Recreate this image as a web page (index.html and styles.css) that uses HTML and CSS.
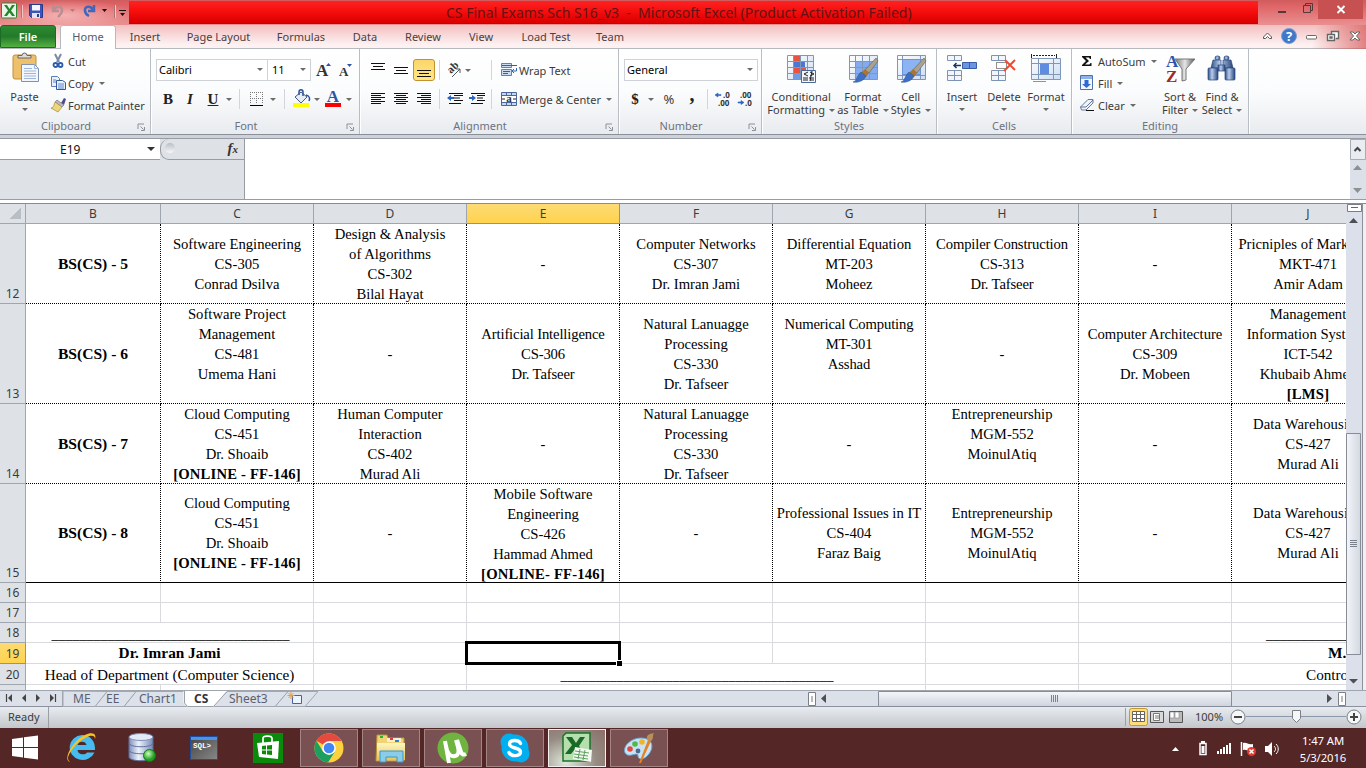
FILE: index.html
```html
<!DOCTYPE html>
<html lang="en">
<head>
<meta charset="utf-8">
<title>CS Final Exams Sch S16_v3 - Microsoft Excel</title>
<link rel="stylesheet" href="styles.css">
</head>
<body>
<svg width="0" height="0" class="defs">
  <defs>
    <linearGradient id="blue" x1="0" y1="0" x2="0" y2="1"><stop offset="0" stop-color="#9dbdee"/><stop offset="1" stop-color="#3f6ac0"/></linearGradient>
    <linearGradient id="pale" x1="0" y1="0" x2="1" y2="1"><stop offset="0" stop-color="#fff"/><stop offset="1" stop-color="#cdddf3"/></linearGradient>
    <linearGradient id="steel" x1="0" y1="0" x2="1" y2="0"><stop offset="0" stop-color="#2f4f86"/><stop offset=".4" stop-color="#b9cdec"/><stop offset="1" stop-color="#27457c"/></linearGradient>
    <linearGradient id="grey" x1="0" y1="0" x2="1" y2="0"><stop offset="0" stop-color="#777"/><stop offset=".5" stop-color="#e6e6e6"/><stop offset="1" stop-color="#555"/></linearGradient>
    <linearGradient id="gold" x1="0" y1="0" x2="0" y2="1"><stop offset="0" stop-color="#fff6c0"/><stop offset="1" stop-color="#e5c557"/></linearGradient>
    <linearGradient id="db" x1="0" y1="0" x2="1" y2="0"><stop offset="0" stop-color="#7c90bd"/><stop offset=".4" stop-color="#eef3fb"/><stop offset="1" stop-color="#7489b8"/></linearGradient>
    <linearGradient id="term" x1="0" y1="0" x2="1" y2="1"><stop offset="0" stop-color="#444"/><stop offset="1" stop-color="#888"/></linearGradient>
    <radialGradient id="ball" cx=".4" cy=".35"><stop offset="0" stop-color="#cffcc0"/><stop offset="1" stop-color="#1fa01f"/></radialGradient>
    <g id="excel"><rect x=".5" y="1" width="15" height="15" rx="1" fill="#e9f5e6" stroke="#2b8735"/><path d="M3 3h3l2.500 4L11 3h3l-4 5.500L14 14h-3L8.500 10.500 6 14H3l4-5.500z" fill="#25852e"/></g>
    <g id="brush"><path d="M29 4l2 3-9 12-4-3z" fill="#a9a28f" stroke="#655e4d" stroke-width=".6"/><path d="M18 15l4 4-3 4-5-4z" fill="#a9752f"/><path d="M14 18l5 4c-2 5-8 7-13 6 4-1 4-7 8-10z" fill="#3f6fc4" stroke="#2c4f91" stroke-width=".5"/></g>
    <g id="launch"><path d="M1 6V1h6M3.500 3.500l3 3M7.500 4v3.500H4" fill="none" stroke="#8b9099"/></g>
  </defs>
</svg>
<div class="window">
  <header class="titlebar">
    <div class="qat">
      <svg width="129" height="24" viewBox="0 0 129 24">
        <use href="#excel" x="1" y="2"/>
        <path d="M21.500 5v13M114.500 5v13" stroke="#a87575"/><path d="M22.500 5v13M115.500 5v13" stroke="#f3c4c4"/>
        <path d="M29.500 4.500h13v13h-11l-2-2z" fill="#3d55b8" stroke="#27398a"/><path d="M32 5h8v5.500h-8z" fill="#f4f6ff"/><path d="M32 13h8v5h-8z" fill="#dfe5f5"/><path d="M37 14h2v3h-2z" fill="#2a3d92"/>
        <path d="M53 5v6h6M54 10c2-5 9-4 8 1-.5 3-2 4-4 6" fill="none" stroke="#b98e92" stroke-width="2.400"/>
        <path d="M70 9h5l-2.500 3z" fill="#a88083"/>
        <path d="M94 5v6h-6M93 10c-2-5-9-4-8 1 .5 3 2 4 4 5" fill="none" stroke="#3d68bb" stroke-width="2.500"/>
        <path d="M102 9h5l-2.500 3zM120 13h5l-2.500 3zM119 10h7v1h-7z" fill="#111"/>
      </svg>
    </div>
    <div class="caption">CS Final Exams Sch S16_v3 &nbsp;-&nbsp; Microsoft Excel (Product Activation Failed)</div>
    <svg class="winbtns" width="108" height="24" viewBox="0 0 108 24"><rect x="60" y="0" width="45" height="19" fill="#c75050"/><path d="M20 11h8v2h-8z" fill="#53393c"/><path d="M45.500 5.500h7v7h-7zM47.500 5V3.500h7v7H53" fill="none" stroke="#53393c"/><path d="M79.500 6l7 7M86.500 6l-7 7" stroke="#fff" stroke-width="1.900"/></svg>
  </header>
  <nav class="tabs">
    <div class="file">File</div><div class="tab active">Home</div><div class="tab">Insert</div><div class="tab">Page Layout</div><div class="tab">Formulas</div><div class="tab">Data</div><div class="tab">Review</div><div class="tab">View</div><div class="tab">Load Test</div><div class="tab">Team</div>
    <svg class="tabtools" width="106" height="24" viewBox="0 0 106 24"><path d="M3.500 13.500v-1.500l4-4 4 4v1.500h-2L7.500 11.500 5.500 13.500z" fill="#fff" stroke="#555"/><circle cx="29" cy="11" r="7.500" fill="#3f78c9" stroke="#7d9fd5"/><text x="29" y="15.500" text-anchor="middle" class="q">?</text><rect x="46.500" y="10.500" width="10" height="3.500" rx="1" fill="#fff" stroke="#666"/><path d="M71.500 9V6.500h7v7H76M67.500 9.500h7v6h-7zM70 12h2v1h-2z" fill="#fff" stroke="#666" stroke-width="1.400"/><path d="M90 7h3l2 2 2-2h3l-3.500 4 3.500 4h-3l-2-2-2 2h-3l3.500-4z" fill="#fff" stroke="#666"/></svg>
  </nav>

  <section class="ribbon">
    <div class="group g-clip">
      <div class="body">
        <div class="big paste"><svg width="32" height="32" viewBox="0 0 32 32"><rect x="4" y="3" width="23" height="24" rx="2" fill="#efc06b" stroke="#c18f3b"/><path d="M9 6V3.500h4a2.500 2.500 0 0 1 5 0h4V6z" fill="#ddd" stroke="#666"/><path d="M12.500 12.500h13l4 4v13h-17z" fill="#f3f7fd" stroke="#7d93b3"/><path d="M25.500 12.500v4h4M15 16.500h8M15 19h12M15 21.500h12M15 24h12M15 26.500h12" fill="none" stroke="#9fb6d8"/></svg><span>Paste</span><i class="dd"></i></div>
        <div class="stack">
          <div class="cmd"><svg width="18" height="16" viewBox="0 0 18 16"><path d="M6 1l4 8M12 1L8 9" stroke="#7b8aa0" stroke-width="2"/><circle cx="6.500" cy="12" r="2" fill="none" stroke="#2c5cac" stroke-width="1.800"/><circle cx="11.500" cy="12" r="2" fill="none" stroke="#2c5cac" stroke-width="1.800"/></svg>Cut</div>
          <div class="cmd"><svg width="18" height="16" viewBox="0 0 18 16"><path d="M2.500 1.500h6l2 2v8h-8z" fill="#eaf1fb" stroke="#5c7fb9"/><path d="M7.500 5.500h6l3 2v7h-9z" fill="#eaf1fb" stroke="#34599c"/><path d="M9 9h6M9 11h6M4 5h3M4 7h3M9 13h6" stroke="#5a86cf"/></svg>Copy<i class="dd"></i></div>
          <div class="cmd"><svg width="18" height="16" viewBox="0 0 18 16"><path d="M12 6l3-5 2 1-2 6z" fill="#4d4c86"/><path d="M8 3l7 5-2 2-7-5z" fill="#b9b9c6" stroke="#676779" stroke-width=".6"/><path d="M6 5l7 5-4 5-7-4c3 0 3-4 4-6z" fill="#ecd77e" stroke="#a98632" stroke-width=".7"/></svg>Format Painter</div>
        </div>
      </div>
      <div class="label"><span>Clipboard</span><svg width="9" height="9"><use href="#launch"/></svg></div>
    </div>

    <div class="group g-font">
      <div class="rows">
        <div class="row r1"><div class="combo">Calibri<i class="dd"></i></div><div class="combo">11<i class="dd"></i></div><svg width="22" height="22" viewBox="0 0 22 22"><text x="5" y="17" class="serifb s17">A</text><path d="M15 7h5l-2.500-3z" fill="#2c55a8"/></svg><svg width="20" height="22" viewBox="0 0 20 22"><text x="4" y="17" class="serifb s12">A</text><path d="M12 5h5l-2.500 3z" fill="#2c55a8"/></svg></div>
        <div class="row r2"><b>B</b><em>I</em><u>U</u><i class="dd"></i><i class="sep"></i><svg width="20" height="20" viewBox="0 0 20 20"><path d="M3 3.500h13M3 9.500h13M3.500 3v12M9.500 3v12M15.500 3v12" stroke="#777" stroke-dasharray="1 1"/><path d="M3 16.500h13" stroke="#000"/></svg><i class="dd"></i><i class="sep"></i><svg width="20" height="20" viewBox="0 0 20 20"><path d="M4 8l6-5 6 5-6 6z" fill="#e8edf5" stroke="#415a88"/><path d="M8 6V3c0-3 4-3 4 0v4M15 6c4 1 4 4 3 6" stroke="#2e5297" stroke-width="1.500" fill="none"/><rect x="2" y="14" width="16" height="4" fill="#ff0"/></svg><i class="dd"></i><svg width="20" height="20" viewBox="0 0 20 20"><text x="10" y="13" text-anchor="middle" class="serifb s17 blue">A</text><rect x="2" y="14" width="16" height="4" fill="#f00"/></svg><i class="dd"></i></div>
      </div>
      <div class="label"><span>Font</span><svg width="9" height="9"><use href="#launch"/></svg></div>
    </div>

    <div class="group g-align">
      <div class="rows">
        <div class="row r1"><svg width="16" height="20" viewBox="0 0 16 20"><path d="M1 3.500h14M3 6.500h10M1 5h0M1 9.500h14" stroke="#111"/></svg><svg width="16" height="20" viewBox="0 0 16 20"><path d="M1 7.500h14M3 10.500h10M1 13.500h14" stroke="#111"/></svg><span class="on"><svg width="16" height="20" viewBox="0 0 16 20"><path d="M1 10.500h14M3 13.500h10M1 16.500h14" stroke="#111"/></svg></span><i class="sep"></i><svg class="free" width="18" height="18" viewBox="0 0 18 18"><text transform="translate(6 13) rotate(-45)" class="serifb s10">ab</text><path d="M7 16l8-8M11 8h4v4" fill="none" stroke="#555"/></svg><i class="dd"></i><i class="sep tall"></i><svg width="18" height="18" viewBox="0 0 18 18"><path d="M1.500 2.500h10v4h-10zM1.500 8.500h10v6h-10z" fill="#cbdcf3" stroke="#6181ae"/><path d="M2 4.500h15M3 10.500h7M3 12.500h5" stroke="#805127"/><path d="M16.500 7v3h-4M14 8l-2 2 2 2" fill="none" stroke="#3664ae"/></svg><span class="t">Wrap Text</span></div>
        <div class="row r2"><svg width="16" height="16" viewBox="0 0 16 16"><path d="M1 2.500h14M1 4.500h10M1 6.500h14M1 8.500h10M1 10.500h14M1 12.500h10" stroke="#111"/></svg><svg width="16" height="16" viewBox="0 0 16 16"><path d="M1 2.500h14M3 4.500h10M1 6.500h14M3 8.500h10M1 10.500h14M3 12.500h10" stroke="#111"/></svg><svg width="16" height="16" viewBox="0 0 16 16"><path d="M1 2.500h14M5 4.500h10M1 6.500h14M5 8.500h10M1 10.500h14M5 12.500h10" stroke="#111"/></svg><i class="sep"></i><svg width="18" height="16" viewBox="0 0 18 16"><path d="M3 2.500h14M8 4.500h9M8 7h6M8 9.500h9M3 12.500h12" stroke="#111"/><path d="M1 7l4-3v2h3v2H5v2z" fill="#2c64c4"/></svg><svg width="18" height="16" viewBox="0 0 18 16"><path d="M3 2.500h14M9 4.500h8M9 7h6M9 9.500h8M3 12.500h12" stroke="#111"/><path d="M8 7L4 4v2H1v2h3v2z" fill="#2c64c4"/></svg><i class="sep tall"></i><svg width="18" height="16" viewBox="0 0 18 16"><path d="M1.500 1.500h15v13h-15zM1.500 4.500h15M1.500 11.500h15M6.500 1v3M11.500 1v3M6.500 12v3M11.500 12v3" fill="#c4d6f1" stroke="#49679c"/><path d="M2 5h14v6H2z" fill="#fff"/><text x="9" y="11" text-anchor="middle" class="serifb s10">a</text><path d="M2 8h3M13 8h3" stroke="#222"/></svg><span class="t">Merge &amp; Center</span><i class="dd"></i></div>
      </div>
      <div class="label"><span>Alignment</span><svg width="9" height="9"><use href="#launch"/></svg></div>
    </div>

    <div class="group g-num">
      <div class="rows">
        <div class="row r1"><div class="combo">General<i class="dd"></i></div></div>
        <div class="row r2"><b class="dollar">$</b><i class="dd"></i><span class="pct">%</span><b class="comma">,</b><i class="sep"></i><svg width="18" height="18" viewBox="0 0 18 18"><text x="9" y="8" class="num">.0</text><text x="4" y="16" class="num">.00</text><path d="M1 5l3-2v1.500h3v1H4V7z" fill="#2c64c4" stroke="#2c64c4" stroke-width=".6"/></svg><svg width="18" height="18" viewBox="0 0 18 18"><text x="4" y="8" class="num">.00</text><text x="9" y="16" class="num">.0</text><path d="M8 12.500l-3-2V12H2v1h3v1.500z" fill="#2c64c4" stroke="#2c64c4" stroke-width=".6"/></svg></div>
      </div>
      <div class="label"><span>Number</span><svg width="9" height="9"><use href="#launch"/></svg></div>
    </div>

    <div class="group g-style">
      <div class="body">
        <div class="big"><svg width="32" height="32" viewBox="0 0 32 32"><path d="M2.500 3.500h26v24h-26z" fill="url(#pale)" stroke="#7f97b8"/><path d="M9 4h6v23H9z" fill="#6f9ae4"/><path d="M9 4h6v5H9zM9 16h12v5H9z" fill="#e8523f"/><path d="M9 10h11v5H9z" fill="#4779d2"/><path d="M8.500 3v24M15.500 3v24M22.500 3v24M2 9.500h26M2 15.500h26M2 21.500h26" stroke="#7f97b8"/><path d="M16.500 18.500h14v12h-14z" fill="#f3f6fc" stroke="#496999"/><path d="M23 20l-4 2 4 2M18 26h5M18 28h5M25 20l4 2-4 2M24 26h5M25 28h4M27 19l-2 10" fill="none" stroke="#222"/></svg><span>Conditional</span><span>Formatting<i class="dd"></i></span></div>
        <div class="big"><svg width="32" height="32" viewBox="0 0 32 32"><path d="M2.500 3.500h28v24h-28z" fill="url(#pale)" stroke="#7f97b8"/><path d="M9 9h21v18H9z" fill="#83abef"/><path d="M8.500 3v24M15.500 3v24M22.500 3v24M2 9.500h28M2 15.500h28M2 21.500h28" stroke="#7f97b8"/><use href="#brush" y="2"/></svg><span>Format</span><span>as Table<i class="dd"></i></span></div>
        <div class="big"><svg width="32" height="32" viewBox="0 0 32 32"><path d="M2.500 3.500h28v24h-28zM7.500 3v24M25.500 3v24M2 7.500h28M2 23.500h28" fill="url(#pale)" stroke="#7f97b8"/><path d="M7.500 7.500h18v15h-18z" fill="#8db4f2" stroke="#6b93d5"/><use href="#brush" y="2"/></svg><span>Cell</span><span>Styles<i class="dd"></i></span></div>
      </div>
      <div class="label"><span>Styles</span></div>
    </div>

    <div class="group g-cells">
      <div class="body">
        <div class="big"><svg width="32" height="32" viewBox="0 0 32 32"><path d="M1.500 3.500h14v5h-14zM8.500 3v5M1.500 18.500h14v10h-14zM1.500 23.500h14M8.500 18v10" fill="#f2f6fc" stroke="#7d93b3"/><path d="M16.500 10.500h14v6h-14zM23.500 10v6" fill="#6a95e3" stroke="#3a5ea6"/><path d="M15 13.500H8M10.500 11L8 13.500l2.500 2.500" fill="none" stroke="#1e355f" stroke-width="1.500"/></svg><span>Insert</span><i class="dd"></i></div>
        <div class="big"><svg width="32" height="32" viewBox="0 0 32 32"><path d="M3.500 3.500h14v5h-14zM10.500 3v5M3.500 18.500h14v10h-14zM3.500 23.500h14M10.500 18v10" fill="#f2f6fc" stroke="#7d93b3"/><path d="M8.500 10.500h10v6h-10z" fill="none" stroke="#222" stroke-dasharray="1 1"/><path d="M17 8l10 10M27 8L16 19" stroke="#ee4b31" stroke-width="2"/></svg><span>Delete</span><i class="dd"></i></div>
        <div class="big"><svg width="32" height="32" viewBox="0 0 32 32"><path d="M1.500 2v4M26.500 2v4" stroke="#222"/><path d="M3 3.500h22" stroke="#222" stroke-dasharray="2 1"/><path d="M1.500 6.500h29v21h-29zM8.500 6v21M23.500 6v21M1 11.500h29M1 22.500h29" fill="url(#pale)" stroke="#7f97b8"/><path d="M10 12h9v10h-9z" fill="#5d8ce0"/><path d="M3 29.500h13" stroke="#8695ad"/></svg><span>Format</span><i class="dd"></i></div>
      </div>
      <div class="label"><span>Cells</span></div>
    </div>

    <div class="group g-edit">
      <div class="body">
        <div class="stack">
          <div class="cmd"><svg width="18" height="16" viewBox="0 0 18 16"><path d="M3 3h9v3h-1l-1-1.500H6.500L10 8l-4 3.500h4.500l1-1.500h1v3H3v-1l4-4-4-4z" fill="#111"/></svg>AutoSum<i class="dd"></i></div>
          <div class="cmd"><svg width="18" height="16" viewBox="0 0 18 16"><path d="M1.500.5h12v14h-12z" fill="#f3f7fd" stroke="#4f71ad"/><path d="M2 1h11v3H2z" fill="#8fb2ea"/><path d="M5.500 5h4v4h2.500l-4.500 4L3 9h2.500z" fill="#2d6bd3"/></svg>Fill<i class="dd"></i></div>
          <div class="cmd"><svg width="18" height="16" viewBox="0 0 18 16"><path d="M1.500 10L9 2.500h5V6l-7 7H2.500z" fill="#eef2fa" stroke="#66799a"/><path d="M1.500 10h5.500l7-7" fill="none" stroke="#66799a"/><path d="M7 13.500h8" stroke="#111"/></svg>Clear<i class="dd"></i></div>
        </div>
        <div class="big"><svg width="32" height="32" viewBox="0 0 32 32"><text x="2" y="15" class="serifb s17 blue">A</text><text x="2" y="30" class="serifb s17 red">Z</text><path d="M11 7h20l-9 10v11l-4 1V17z" fill="url(#grey)" stroke="#777"/></svg><span>Sort &amp;</span><span>Filter<i class="dd"></i></span></div>
        <div class="big"><svg width="32" height="32" viewBox="0 0 32 32"><g fill="url(#steel)" stroke="#27457c" stroke-width=".7"><rect x="9" y="4" width="5" height="4" rx="2"/><rect x="18" y="4" width="5" height="4" rx="2"/><path d="M7 8h8v8H5zM17 8h8l2 8H17z"/><rect x="2" y="16" width="10" height="12" rx="1"/><rect x="19" y="16" width="10" height="12" rx="1"/><rect x="12" y="13" width="7" height="6"/></g></svg><span>Find &amp;</span><span>Select<i class="dd"></i></span></div>
      </div>
      <div class="label"><span>Editing</span></div>
    </div>
  </section>

  <section class="formula">
    <div class="left">
      <div class="namebox"><span>E19</span><i class="dd"></i></div>
      <div class="fx"><i class="knob"></i><em>f<small>x</small></em></div>
    </div>
    <div class="input"></div>
    <svg width="16" height="60" viewBox="0 0 16 60"><path d="M0 0h16v60H0z" fill="#dce0e8"/><path d="M.5.500h15v20H.5z" fill="#e9ecf1" stroke="#a7abb2"/><path d="M4.500 12l3-3 3 3" fill="none" stroke="#444" stroke-width="2"/><path d="M3 31h9l-4.500-5zM3 49h9l-4.500 5z" fill="#8a9294"/></svg>
  </section>

  <main class="sheet">
    <div class="grid">
      <div class="gr head"><div class="rh corner"></div><div>B</div><div>C</div><div>D</div><div class="sel">E</div><div>F</div><div>G</div><div>H</div><div>I</div><div>J</div></div>
      <div class="gr dot h80"><div class="rh">12</div><div class="c lead">BS(CS) - 5</div><div class="c">Software Engineering<br>CS-305<br>Conrad Dsilva</div><div class="c">Design &amp; Analysis<br>of Algorithms<br>CS-302<br>Bilal Hayat</div><div class="c">-</div><div class="c">Computer Networks<br>CS-307<br>Dr. Imran Jami</div><div class="c">Differential Equation<br>MT-203<br>Moheez</div><div class="c tight">Compiler Construction<br>CS-313<br>Dr. Tafseer</div><div class="c">-</div><div class="c">Pricniples of Marketing<br>MKT-471<br>Amir Adam</div></div>
      <div class="gr dot h100"><div class="rh">13</div><div class="c lead">BS(CS) - 6</div><div class="c up">Software Project<br>Management<br>CS-481<br>Umema Hani</div><div class="c">-</div><div class="c tight">Artificial Intelligence<br>CS-306<br>Dr. Tafseer</div><div class="c">Natural Lanuagge<br>Processing<br>CS-330<br>Dr. Tafseer</div><div class="c up tight">Numerical Computing<br>MT-301<br>Asshad</div><div class="c">-</div><div class="c">Computer Architecture<br>CS-309<br>Dr. Mobeen</div><div class="c">Management<br>Information Systems<br>ICT-542<br>Khubaib Ahmed<br><b>[LMS]</b></div></div>
      <div class="gr dot h80"><div class="rh">14</div><div class="c lead">BS(CS) - 7</div><div class="c">Cloud Computing<br>CS-451<br>Dr. Shoaib<br><b>[ONLINE - FF-146]</b></div><div class="c">Human Computer<br>Interaction<br>CS-402<br>Murad Ali</div><div class="c">-</div><div class="c">Natural Lanuagge<br>Processing<br>CS-330<br>Dr. Tafseer</div><div class="c">-</div><div class="c up">Entrepreneurship<br>MGM-552<br>MoinulAtiq</div><div class="c">-</div><div class="c wide">Data Warehousing<br>CS-427<br>Murad Ali</div></div>
      <div class="gr dot last h99"><div class="rh">15</div><div class="c lead">BS(CS) - 8</div><div class="c">Cloud Computing<br>CS-451<br>Dr. Shoaib<br><b>[ONLINE - FF-146]</b></div><div class="c">-</div><div class="c">Mobile Software<br>Engineering<br>CS-426<br>Hammad Ahmed<br><b>[ONLINE- FF-146]</b></div><div class="c">-</div><div class="c">Professional Issues in IT<br>CS-404<br>Faraz Baig</div><div class="c">Entrepreneurship<br>MGM-552<br>MoinulAtiq</div><div class="c">-</div><div class="c wide">Data Warehousing<br>CS-427<br>Murad Ali</div></div>
      <div class="gr h20"><div class="rh">16</div><div></div><div></div><div></div><div></div><div></div><div></div><div></div><div></div><div></div></div>
      <div class="gr h20"><div class="rh">17</div><div></div><div></div><div></div><div></div><div></div><div></div><div></div><div></div><div></div></div>
      <div class="gr h20"><div class="rh">18</div><div class="m2 line">__________________________________</div><div></div><div></div><div></div><div></div><div></div><div></div><div class="line j1">____________</div></div>
      <div class="gr h21"><div class="rh sel">19</div><div class="m2 name">Dr. Imran Jami</div><div></div><div class="active-cell"></div><div></div><div></div><div></div><div></div><div class="name j2">M.</div></div>
      <div class="gr h21"><div class="rh">20</div><div class="m2 role">Head of Department (Computer Science)</div><div></div><div class="m3 line">_______________________________________</div><div></div><div></div><div class="role j3">Contro</div></div>
      <div class="gr h21"><div class="rh"></div><div></div><div></div><div></div><div class="m3"></div><div></div><div></div><div></div></div>
    </div>
    <svg class="vscroll" width="20" height="486" viewBox="0 0 20 486"><defs><linearGradient id="vs"><stop offset="0" stop-color="#f3f5f9"/><stop offset="1" stop-color="#d3d8e0"/></linearGradient></defs><path d="M0 0h20v486H0z" fill="#dce0ea"/><path d="M16.500 0v486" stroke="#8a8f98"/><path d="M17 0h3v486h-3z" fill="#eef0f5"/><path d="M1.500.5h14v7h-14z" fill="#fff" stroke="#777c85"/><path d="M5 3.500h7" stroke="#666"/><path d="M3 19h9l-4.500-5zM3 475h9l-4.500 4.500z" fill="#4c4f54"/><path d="M.5 229.500h14v221h-14z" fill="url(#vs)" stroke="#868d98"/><path d="M4 336.500h7M4 338.500h7M4 340.500h7M4 342.500h7" stroke="#7b828c"/></svg>
  </main>

  <div class="sheetbar">
    <svg width="62" height="16" viewBox="0 0 62 16"><path d="M6.500 3v8M55.500 3v8" stroke="#444" stroke-width="1.200"/><path d="M12 3v8L8 7zM26 3v8l-4-4zM36 3v8l4-4zM50 3v8l4-4z" fill="#444"/></svg>
    <div class="stabs">
      <svg width="262" height="17" viewBox="0 0 262 17"><path d="M.5 0v16" stroke="#9ba1aa"/><g fill="#dce1ea" stroke="#a2a8b2"><path d="M213 15.500L226 .5h30L243 15.500z"/><path d="M151 15.500L165 .5h61L213 15.500z"/><path d="M62 15.500L74 .5h60v15z"/><path d="M33 15.500L45 .5h29L62 15.500z"/><path d="M1 0v15.500h32L45 .5z"/></g><path d="M121.500 0v12l4 4h26L165 0z" fill="#fff"/><path d="M122.500 0v12l3 3.500h26L165 .5" fill="none" stroke="#9ba1aa"/><path d="M230.500 4.500h9v8h-9z" fill="#eef4fd" stroke="#4a6299"/><path d="M229 1v7M225.500 4.500h7M226.500 2l5 5M231.500 2l-5 5" stroke="#e7a13a"/></svg>
      <div class="names"><span>ME</span><span>EE</span><span>Chart1</span><b>CS</b><span>Sheet3</span></div>
    </div>
    <svg class="hscroll" width="558" height="16" viewBox="0 0 558 16"><defs><linearGradient id="hs" x2="0" y2="1"><stop offset="0" stop-color="#f5f7fa"/><stop offset="1" stop-color="#ced3dc"/></linearGradient></defs><path d="M.5 1.500h7v13h-7zM530.500 1.500h7v13h-7z" fill="#fff" stroke="#7b8088"/><path d="M4 5v6M534 5v6" stroke="#777"/><path d="M18 3v9l-5-4.500zM519 3v9l5-4.500z" fill="#4c4f54"/><path d="M70.500.5h353v15h-353z" fill="url(#hs)" stroke="#868d98"/><path d="M243.500 4v7M245.500 4v7M247.500 4v7M249.500 4v7" stroke="#7b828c"/></svg>
  </div>

  <footer class="status">
    <span class="ready">Ready</span>
    <svg width="241" height="20" viewBox="0 0 241 20"><path d="M.5 1v18" stroke="#9a9ea6"/><rect x="4.500" y="1.500" width="18" height="17" rx="2" fill="#ffdd7a" stroke="#c2983a"/><path d="M7.500 4.500h12v10h-12zM11.500 4v10M15.500 4v10M7 7.500h12M7 11.500h12" fill="#fff" stroke="#666"/><path d="M25.500 4.500h13v11h-13z" fill="#d9d9d9" stroke="#555"/><path d="M28.500 6.500h6v7h-6z" fill="#fff" stroke="#777"/><path d="M30 9h4M30 11h4" stroke="#777"/><path d="M44.500 4.500h13v11h-13z" fill="#bbb" stroke="#555"/><path d="M45 5h4v6h-4zM50 5h4v6h-4z" fill="#fff" stroke="#888" stroke-width=".6"/><text x="70" y="14" class="zoom">100%</text><path d="M121 9.500h100" stroke="#8a98ab"/><g fill="#f5f6f8" stroke="#7b7f86"><circle cx="113" cy="10" r="7"/><circle cx="229" cy="10" r="7"/><path d="M167.500 3.500h8v8l-4 4-4-4z"/></g><path d="M109 10h8M225 10h8M229 6v8" stroke="#444" stroke-width="2"/></svg>
  </footer>

  <div class="taskbar">
    <div class="pins">
      <svg width="28" height="28" viewBox="0 0 28 28"><path d="M1 5l11-1.500V13H1zM13 3.300L27 1.500V13H13zM1 14h11v9.500L1 22zM13 14h14v11.500L13 23.700z" fill="#fff"/></svg>
      <svg width="32" height="32" viewBox="0 0 32 32"><path d="M17 3a13 12.500 0 1 0 12.500 17.500H22c-2 3-9 2.500-9.500-2.500H30C30.500 9 25 3 17 3zm-4.500 10c1-4.500 8.500-4.500 9 0z" fill="#45bdf0" fill-rule="evenodd"/><path d="M5 30C-3 28 8 8 20 3c6-3 12-2 10 4 0-4-4-4-8-2C11 10 3 22 3 26c0 2 1 3 2 4z" fill="#f7c226"/></svg>
      <svg width="32" height="32" viewBox="0 0 32 32"><path d="M3 5v20c0 5 24 5 24 0V5z" fill="url(#db)" stroke="#5b6a94"/><ellipse cx="15" cy="5" rx="12" ry="3.500" fill="#e2eafa" stroke="#8290b5"/><path d="M3 11c0 5 24 5 24 0M3 18c0 5 24 5 24 0" fill="none" stroke="#5f6f99"/><circle cx="23.500" cy="23.500" r="6" fill="url(#ball)" stroke="#167a18"/></svg>
      <svg width="32" height="32" viewBox="0 0 32 32"><rect x="2.500" y="4.500" width="27" height="23" fill="url(#term)" stroke="#1f4f9c"/><path d="M3 5h26v3H3z" fill="#4d92ea"/><text x="5" y="15.500" class="sql">SQL&gt;</text></svg>
      <svg width="32" height="32" viewBox="0 0 32 32"><path d="M1 1h30v30H1z" fill="#0a8a0a"/><path d="M5 11l22-2-1 18-19-2z" fill="#fff"/><path d="M11 11V6c0-2 8-3 9 0v4" fill="none" stroke="#fff" stroke-width="1.700"/><path d="M10 14l4-.5v4h-4zM15 13.400l5-.4v4.500h-5zM10 18.500h4v4l-4-.5zM15 18.500h5v4.500l-5-.4z" fill="#0a8a0a"/></svg>
    </div>
    <div class="apps">
      <div><svg width="32" height="32" viewBox="0 0 32 32"><circle cx="16" cy="16" r="14.500" fill="#fdd23e"/><path d="M16 16L3.400 8.700A14.500 14.500 0 0 1 28.600 9H16z" fill="#e44a3d"/><path d="M3.400 8.700A14.500 14.500 0 0 0 15 30.500L22 19.500 16 23l-6-3.500z" fill="#1ba05f"/><circle cx="16" cy="16" r="6.800" fill="#fff"/><circle cx="16" cy="16" r="5.300" fill="#4286f5"/></svg></div>
      <div><svg width="32" height="32" viewBox="0 0 32 32"><path d="M2 3h10l1 3h16v23H1z" fill="#f0d375" stroke="#b8923a"/><path d="M5 4h3v2H5z" fill="#2db22d"/><path d="M12 6h14v4H12z" fill="#f7efcd"/><path d="M15 6h3v2h-3z" fill="#dd3e30"/><path d="M20 8h4v2h-4z" fill="#2487dd"/><path d="M2 11h28v17H2z" fill="url(#gold)"/><path d="M5 30V19h23v11h-6v-5H11v5z" fill="#8accea" stroke="#3c96c4"/></svg></div>
      <div><svg width="32" height="32" viewBox="0 0 32 32"><circle cx="16" cy="16" r="15.500" fill="#6eb43f"/><path d="M8 9l4 22M9 14c1 8 5 11 9 10 4-1 4-5 3-9l-2-7M20 8l4 12c1 3 3 3 5 2" fill="none" stroke="#fff" stroke-width="4"/></svg></div>
      <div><svg width="32" height="32" viewBox="0 0 32 32"><circle cx="10" cy="10" r="8.500" fill="#00aff0"/><circle cx="22" cy="22" r="8.500" fill="#00aff0"/><circle cx="16" cy="16" r="13.500" fill="#00aff0"/><path d="M21.500 11.500c-1.500-4-11-4-11 .5 0 5 11 3 11 8 0 4.500-9.500 5-11.500.5" fill="none" stroke="#fff" stroke-width="3.400" stroke-linecap="round"/></svg></div>
      <div class="current"><svg width="32" height="32" viewBox="0 0 32 32"><path d="M5 1h24v28H2V4z" fill="#b5dfae" stroke="#197329" stroke-width="1.500"/><path d="M5 5h6l4 6 4-6h5l-6 9 5 8h-6l-3-5-4 5H4l7-9z" fill="#176b24"/><path d="M14 15l17 3-1 12-18-3z" fill="#f3f9f1"/><path d="M14 19l14 2M13 22l14 2M13 25l14 2M19 17l-2 10M24 18l-2 10" stroke="#5fa35c"/></svg></div>
      <div><svg width="32" height="32" viewBox="0 0 32 32"><path d="M3 22C-2 17 6 6 18 6c13 0 13 11 7 17-4 5-10 5-10 1 0-5-8 2-12-2z" fill="#c9e3f5" stroke="#6ba4ce"/><circle cx="7" cy="17" r="2.800" fill="#e2483b"/><circle cx="12" cy="12" r="2.800" fill="#51b948"/><circle cx="19" cy="10" r="2.800" fill="#f3b229"/><circle cx="15" cy="19" r="2.400" fill="#496b91"/><path d="M16 31l9-23 3 1-10 22z" fill="#e38326"/><path d="M24 8c-1-5 2-6 7-7-2 3 0 6-3 8z" fill="#bb9057"/></svg></div>
    </div>
    <svg class="tray" width="120" height="40" viewBox="0 0 120 40"><path d="M4 23h7l-3.500-4z" fill="#fff"/><rect x="32" y="15.500" width="6" height="11" fill="none" stroke="#fff" stroke-width="1.500"/><path d="M33.500 18h3v7h-3zM33 13h4v2h-4z" fill="#fff"/><path d="M49 23h2v3h-2zM52 21h2v5h-2zM55 19h2v7h-2zM58 17h2v9h-2zM61 15h2v11h-2z" fill="#fff"/><path d="M73.500 14v14" stroke="#fff" stroke-width="1.500"/><path d="M75 15c4-1 5 2 10 1v7c-5 1-6-2-10-1z" fill="#fff"/><circle cx="83.500" cy="23.500" r="4.500" fill="#e33b30"/><path d="M81.500 21.500l4 4M85.500 21.500l-4 4" stroke="#fff" stroke-width="1.500"/><path d="M97 18h3l4-4v14l-4-4h-3z" fill="#fff"/><path d="M106 18c2 2 2 4 0 6M108 16c3 3 3 7 0 10" fill="none" stroke="#fff"/></svg>
    <div class="clock"><span>1:47 AM</span><span>5/3/2016</span></div>
  </div>
</div>
</body>
</html>
```
FILE: styles.css
```css
* { box-sizing: border-box; }
body { margin: 0; width: 1366px; height: 768px; overflow: hidden; font-family: "Noto Sans", "Open Sans", sans-serif; font-size: 11px; color: #3b3b3b; }
svg { display: block; flex: none; }
.defs { position: absolute; }
.window { display: flex; flex-direction: column; width: 1366px; height: 768px; }

.titlebar { display: flex; height: 25px; background: linear-gradient(#cf5c5e 0, #de6265 5px, #e98e8f 24px); }
.qat { width: 129px; background: radial-gradient(ellipse at 50% 60%, rgba(255,215,215,.6), rgba(255,200,200,0) 75%); }
.caption { width: 1129px; height: 23px; margin-top: 1px; padding-left: 317px; background: linear-gradient(#ff2222, #f50d0d 50%, #dc0000 94%); border-bottom: 1px solid #c80000; color: #641313; font-size: 14px; line-height: 23px; white-space: nowrap; }
.tabs { display: flex; height: 24px; background: linear-gradient(#f3bfc0, #fdf1f1 85%); border-bottom: 1px solid #b6babf; color: #4b4142; }
.tabs > div { text-align: center; line-height: 24px; }
.tabs > .file { width: 56px; height: 23px; border-radius: 3px 3px 0 0; background: linear-gradient(#2b8a31, #237a2a 50%, #53b13f); border: 1px solid #1c6b24; color: #fff; line-height: 22px; font-weight: 600; }
.tabs .active { width: 56px; height: 24px; margin: 0 0 0 4px; background: #fff; border: 1px solid #b6babf; border-bottom: 0; border-radius: 3px 3px 0 0; line-height: 22px; color: #555b66; }
.tab:nth-child(3) { width: 58px; } .tab:nth-child(4) { width: 89px; } .tab:nth-child(5) { width: 76px; } .tab:nth-child(6) { width: 52px; } .tab:nth-child(7) { width: 64px; } .tab:nth-child(8) { width: 52px; } .tab:nth-child(9) { width: 78px; } .tab:nth-child(10) { width: 50px; }
.tabtools { margin-left: auto; background: linear-gradient(100deg, rgba(214,80,80,0) 50%, rgba(214,80,80,.7)); }
.q { font: bold 13px "Noto Sans", sans-serif; fill: #fff; }

.ribbon { display: flex; height: 86px; background: linear-gradient(#fff, #fbfcfd 50%, #e8ebef); border-bottom: 1px solid #8b9098; }
.group { display: flex; flex-direction: column; border-right: 1px solid #b9bec5; box-shadow: 1px 0 #fff; }
.g-clip { width: 151px; } .g-font { width: 209px; } .g-align { width: 259px; } .g-num { width: 143px; } .g-style { width: 175px; } .g-cells { width: 135px; } .g-edit { width: 177px; }
.body { display: flex; height: 69px; }
.rows { height: 69px; padding-top: 10px; }
.label { display: grid; grid-template-columns: 13px 1fr 13px; height: 16px; line-height: 16px; color: #6c7280; text-align: center; }
.label span { grid-column: 2; margin-left: -18px; }
.g-style .label span, .g-cells .label span, .g-edit .label span { margin-left: 0; }
.label svg { margin-top: 5px; }
.dd { display: inline-block; width: 0; height: 0; border: solid transparent; border-width: 3px 3px 0; border-top-color: #6b6b6b; }
.big { display: flex; flex-direction: column; align-items: center; padding-top: 3px; line-height: 13px; white-space: nowrap; }
.big svg { margin-bottom: 6px; }
.big > .dd { margin-top: 5px; }
.big span .dd { margin: 0 0 2px 4px; }
.stack { display: flex; flex-direction: column; padding-top: 1px; }
.cmd { display: flex; align-items: center; height: 22px; white-space: nowrap; }
.cmd .dd { margin-left: 5px; }
.cmd svg { margin-right: 1px; }
.paste { width: 49px; }
.g-clip .cmd { letter-spacing: -.05px; }

.row { display: grid; align-items: center; justify-items: center; height: 22px; margin-bottom: 7px; }
.combo { display: flex; align-items: center; justify-content: space-between; justify-self: stretch; height: 22px; padding: 0 4px 1px 2px; background: #fff; border: 1px solid #cfd2d7; color: #000; }
.combo + .combo { border-left: 0; padding-left: 4px; }
.g-font .r1 { grid-template-columns: 112px 43px 22px 24px; padding-left: 5px; }
.g-font .r2 { grid-template-columns: 22px 22px 24px 8px 13px 22px 10px 12px 22px 10px 22px 10px; padding-left: 6px; }
.row b, .row em, .row u { font: bold 15px "Liberation Serif", serif; color: #222; }
.row em { font-style: italic; }
.sep { width: 1px; height: 20px; background: #d2d5da; }
.tall { justify-self: end; margin-right: 7px; }
.free { overflow: visible; }
.g-align .r1 { grid-template-columns: 23px 23px 23px 9px 20px 7px 28px 20px 56px; padding-left: 6px; }
.g-align .r2 { grid-template-columns: 23px 23px 23px 9px 22px 22px 11px 20px 86px 8px; padding-left: 6px; }
.on { width: 22px; height: 22px; padding-left: 2px; border: 1px solid #c2922f; border-radius: 3px; background: linear-gradient(#fbd66b, #ffe784); }
.t { justify-self: start; white-space: nowrap; }
.g-num .r1 { grid-template-columns: 134px; padding-left: 5px; }
.g-num .r2 { grid-template-columns: 22px 10px 26px 20px 10px 22px 22px; padding-left: 5px; }
.row .comma { font-size: 20px; margin-top: -10px; }
.pct { font-size: 13px; }
.num { font: bold 8px "Noto Sans", sans-serif; fill: #333; }
.serifb { font-family: "Liberation Serif", serif; font-weight: bold; fill: #333; }
.s17 { font-size: 17px; } .s12 { font-size: 13px; } .s10 { font-size: 11px; }
.blue { fill: #2d55a5; } .red { fill: #a02c28; }
.g-style .big:nth-child(1) { width: 79px; } .g-style .big:nth-child(2) { width: 45px; } .g-style .big:nth-child(3) { width: 51px; }
.g-cells .body { padding-left: 4px; }
.g-cells .big { width: 42px; }
.g-edit .stack { width: 87px; padding-left: 7px; }
.g-edit .big { width: 42px; }

.formula { display: grid; grid-template-columns: 245px 1fr 16px; height: 69px; padding: 4px 0 3px 0; border-bottom: 1px solid #868c96; background: linear-gradient(#cdd2da 0 3px, #989da5 3px 4px, #fff 4px 64px, #989da5 64px 65px, #fff 65px); }
.formula .left { display: flex; height: 60px; background: #dee2e7; border-right: 1px solid #979ca4; }
.namebox { display: flex; align-items: center; width: 160px; height: 21px; padding: 0 5px 0 60px; justify-content: space-between; background: #fff; border-bottom: 1px solid #979ca4; font-size: 12px; color: #111; }
.namebox .dd { border-width: 4px 4px 0; border-top-color: #333; }
.fx { display: flex; justify-content: space-between; width: 84px; height: 21px; padding: 4px 6px 0 4px; border-left: 1px solid #999; border-bottom: 1px solid #979ca4; border-radius: 9px 0 0 9px; }
.knob { width: 10px; height: 10px; border-radius: 50%; background: linear-gradient(#b9bec5, #f7f8fa); }
.fx em { font: italic bold 15px/10px "Liberation Serif", serif; color: #333; }
.fx small { font-size: 11px; }

.sheet { display: flex; height: 486px; overflow: hidden; background: #fff; }
.grid { width: 1346px; height: 486px; overflow: hidden; }
.gr { display: grid; grid-template-columns: 26px 135px repeat(8, 153px); grid-template-rows: 100%; }
.gr > div { border-right: 1px solid #d8dadd; border-bottom: 1px solid #d8dadd; }
.head { height: 20px; font-size: 12px; line-height: 20px; text-align: center; }
.gr.head > div { background: #dee2e7; border-color: #a0a6ae; }
.gr > .rh { display: flex; align-items: flex-end; justify-content: center; background: #dee2e7; border-color: #a0a6ae; font-size: 12px; line-height: 18px; }
.gr.head > .corner { background: linear-gradient(135deg, #dee2e7 50%, #b8bec6 50%) 10px 4px / 11px 11px no-repeat #dee2e7; }
.gr.head > .sel, .gr > .rh.sel { background: linear-gradient(#fddb75, #ffd34d); border-color: #c18f2c; }
.h80 { height: 80px; } .h100 { height: 100px; } .h99 { height: 99px; } .h20 { height: 20px; } .h21 { height: 21px; }
.c { display: flow-root; align-content: center; text-align: center; font: 14.67px/20px "Liberation Serif", serif; color: #000; white-space: nowrap; }
.c b { letter-spacing: .18px; }
.tight { letter-spacing: -.14px; }
.wide { letter-spacing: .12px; }
.dot > .c { border-right: 1px dotted #000; border-bottom: 1px dotted #000; }
.last > .c { border-bottom: 1px solid #000; }
.dot > .up { padding-bottom: 20px; }
.dot > .lead { font-weight: bold; font-size: 15.6px; }
.m2 { grid-column: span 2; } .m3 { grid-column: span 3; }
.line { padding: 2px 0 0 2px; font: 14px/20px "Liberation Serif", serif; color: #000; text-align: center; white-space: nowrap; }
.name, .role { font: bold 15.3px/20px "Liberation Serif", serif; color: #000; text-align: center; white-space: nowrap; }
.role { font-weight: normal; font-size: 15.2px; line-height: 21px; }
.gr > .j1 { padding-left: 34px; text-align: left; } .gr > .j2 { padding-left: 96px; text-align: left; } .gr > .j3 { padding-left: 74px; text-align: left; }
.gr > .active-cell { position: relative; }
.active-cell::before { content: ""; position: absolute; inset: -2px; border: 3px solid #000; }
.active-cell::after { content: ""; position: absolute; right: -3px; bottom: -3px; width: 5px; height: 5px; background: #000; border: solid #fff; border-width: 1px 0 0 1px; }

.sheetbar { display: flex; height: 17px; background: #dce0e9; border-top: 1px solid #a0a6af; border-bottom: 1px solid #8b929d; }
.stabs { display: grid; width: 746px; }
.stabs > * { grid-area: 1 / 1; }
.names { display: flex; padding-left: 11px; font-size: 12px; line-height: 15px; color: #5a6070; position: relative; }
.names > :nth-child(1) { width: 33px; } .names > :nth-child(2) { width: 33px; } .names > :nth-child(3) { width: 55px; } .names > :nth-child(4) { width: 35px; color: #333; }
.status { display: flex; justify-content: space-between; height: 21px; background: linear-gradient(#e8ebef, #c3c7cb); }
.ready { width: 49px; padding-left: 8px; line-height: 20px; border-right: 1px solid #9a9ea6; }
.zoom { font: 11px "Noto Sans", sans-serif; fill: #3b3b3b; }

.taskbar { display: flex; height: 40px; background: #552626; }
.pins { display: grid; grid-template-columns: 50px 61px 62px 62px 65px; align-items: center; justify-items: center; }
.apps { display: flex; gap: 4px; padding-top: 1px; }
.apps > div { display: flex; align-items: center; justify-content: center; width: 58px; height: 38px; background: #7a5152; border: 1px solid #a48586; }
.apps > .current { background: radial-gradient(ellipse at 30% 90%, #dfe8dc, #968b82 55%, #8a6e6a); border-color: #f3efef; }
.tray { margin-left: 500px; }
.clock { display: flex; flex-direction: column; align-items: center; width: 70px; padding: 4px 0 0; color: #fff; line-height: 17px; font-size: 11.3px; letter-spacing: -.1px; }
.sql { font: bold 7.5px "Liberation Mono", monospace; fill: #fff; }
```
